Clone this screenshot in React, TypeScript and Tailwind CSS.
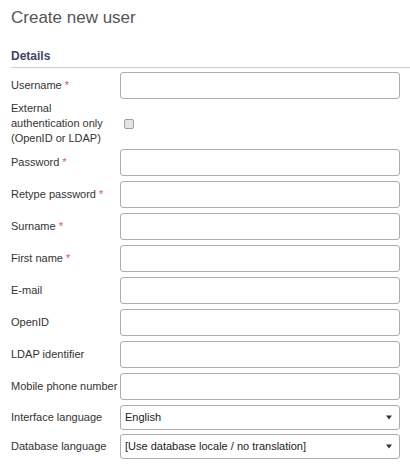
import React from "react";

type Field = { label: string; required?: boolean; kind?: "text" | "select"; value?: string };

const fields: Field[] = [
   { label: "Password", required: true },
   { label: "Retype password", required: true },
   { label: "Surname", required: true },
   { label: "First name", required: true },
   { label: "E-mail" },
   { label: "OpenID" },
   { label: "LDAP identifier" },
   { label: "Mobile phone number" },
];

const Label = ({ text, required }: { text: string; required?: boolean }) => (
   <div className="w-[109px] shrink-0 text-[11px] leading-[15px] text-[#333]">
      {text}
      {required && <span className="text-[#e5505a]"> *</span>}
   </div>
);

const TextInput = () => (
   <div className="flex-1 h-[27px] border border-[#adadad] rounded-[3px] bg-white" />
);

const Select = ({ value }: { value: string }) => (
   <div className="flex-1 h-[25px] border border-[#adadad] rounded-[3px] bg-white flex items-center justify-between pl-[4px] pr-[7px] text-[11px] text-[#222]">
      <span>{value}</span>
      <svg width="6" height="5" viewBox="0 0 6 5">
         <path d="M0 0.5 H6 L3 4.5 Z" fill="#333" />
      </svg>
   </div>
);

export default function App() {
   return (
      <div className="w-[410px] h-[465px] bg-white font-['Liberation_Sans',Arial,sans-serif] pl-[11px] overflow-hidden">
         {/* --- Header --- */}
         <h1 className="pt-[8px] text-[17px] leading-[20px] text-[#555]">Create new user</h1>

         <div className="mt-[20px] border-b border-[#c9cdd9] pb-[3px]">
            <h2 className="text-[12px] leading-[16px] font-bold text-[#3f4569]">Details</h2>
         </div>

         {/* --- Form rows --- */}
         <div className="pr-[10px] flex flex-col">
            <div className="flex items-center mt-[4px]">
               <Label text="Username" required />
               <TextInput />
            </div>

            <div className="flex items-center mt-[2px] h-[45px]">
               <Label text="External authentication only (OpenID or LDAP)" />
               <div className="ml-[4px] w-[10px] h-[10px] border border-[#a0a0a0] rounded-[2px] bg-[#e4e4e4]" />
            </div>

            {fields.map((f, i) => (
               <div key={f.label} className={`flex items-center ${i === 0 ? "mt-[3px]" : "mt-[5px]"}`}>
                  <Label text={f.label} required={f.required} />
                  <TextInput />
               </div>
            ))}

            <div className="flex items-center mt-[5px]">
               <Label text="Interface language" />
               <Select value="English" />
            </div>
            <div className="flex items-center mt-[4px]">
               <Label text="Database language" />
               <Select value="[Use database locale / no translation]" />
            </div>
         </div>
      </div>
   );
}
